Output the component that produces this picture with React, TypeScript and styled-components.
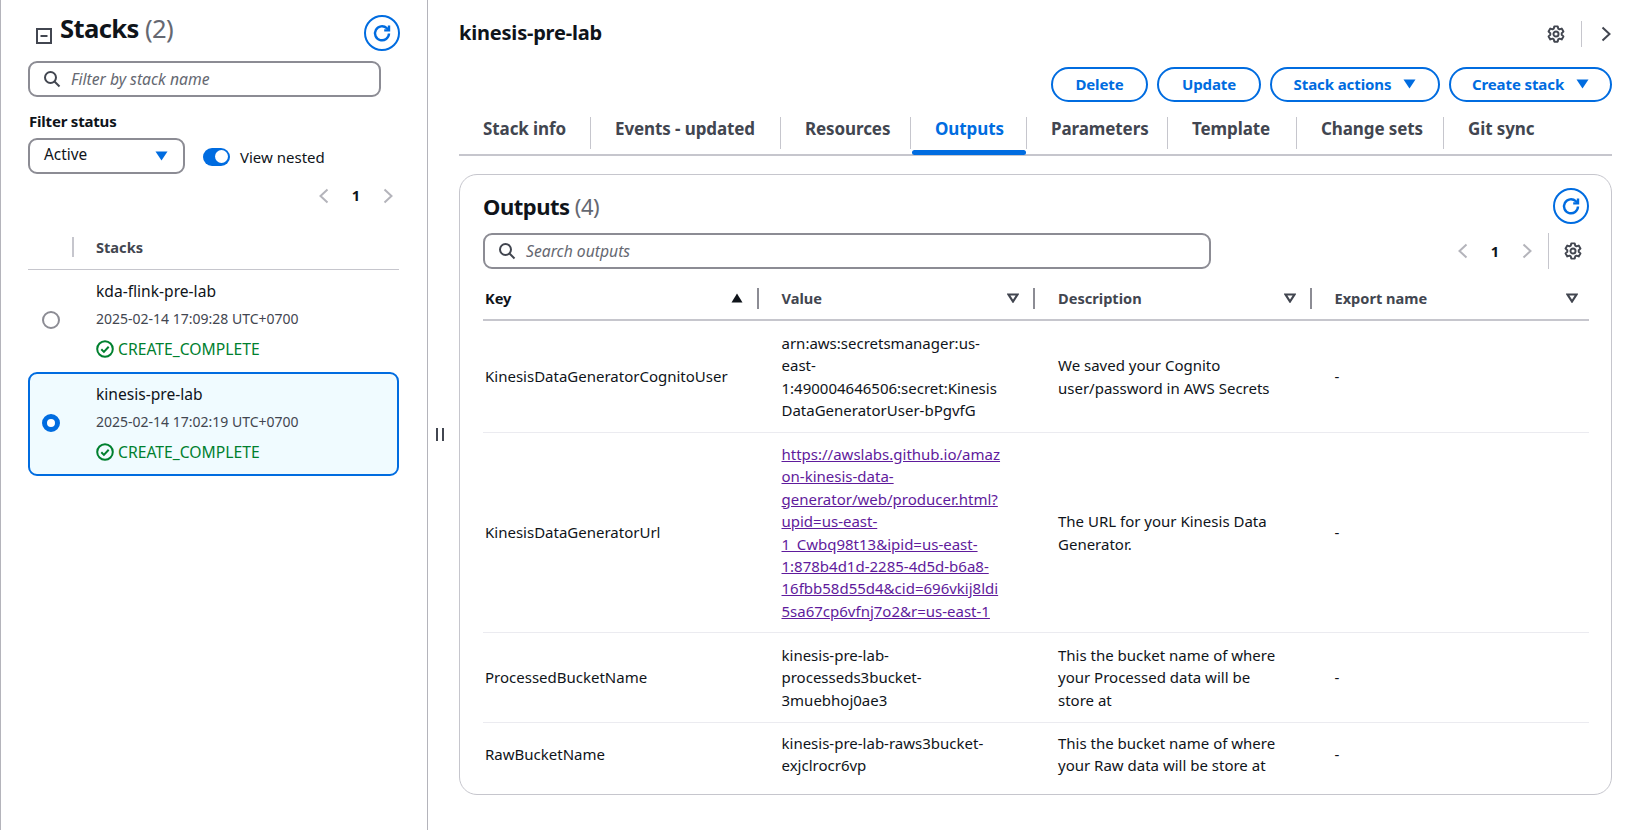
import { FunctionComponent, ReactNode } from "react";
import styled, { createGlobalStyle } from "styled-components";

const BLUE = "#006ce0";
const TEXT = "#0f141a";
const SUBTLE = "#424650";
const GREY = "#8c8c94";
const LINE = "#c6c6cd";

const GlobalStyle = createGlobalStyle`
  html, body {
    margin: 0;
    padding: 0;
    background: #ffffff;
  }
  body {
    font-family: "Noto Sans", "Open Sans", sans-serif;
    font-size: 15px;
    line-height: 22.4px;
    color: ${TEXT};
  }
  *, *::before, *::after {
    box-sizing: border-box;
  }
`;

const Page = styled.div`
  display: flex;
  height: 830px;
  width: 1638px;
  overflow: hidden;
`;

/* left panel */
const SidePanel = styled.aside`
  width: 428px;
  flex-shrink: 0;
  border-left: 1px solid #b4b4bb;
  border-right: 1px solid #b4b4bb;
  padding: 14px 27px 0 27px;
`;
const SideHead = styled.div`
  display: flex;
  align-items: center;
  justify-content: space-between;
  height: 37px;
  margin-bottom: 10px;
`;
const SideTitle = styled.div`
  display: flex;
  align-items: center;
  gap: 8px;
  padding-left: 8px;
  svg {
    margin-top: 6px;
  }
`;
const H1 = styled.h1`
  margin: 0 0 8px;
  font-size: 25.6px;
  line-height: 32px;
  font-weight: 700;
  letter-spacing: -0.6px;
  span {
    font-weight: 400;
    color: #656871;
  }
`;
const H2 = styled.h2`
  margin: 0;
  font-size: 22px;
  line-height: 30px;
  font-weight: 700;
  letter-spacing: -0.5px;
  span {
    font-weight: 400;
    color: #656871;
  }
`;
const RoundIconButton = styled.button`
  width: 36px;
  height: 36px;
  flex-shrink: 0;
  border: 2px solid ${BLUE};
  border-radius: 50%;
  background: #fff;
  padding: 0;
  display: flex;
  align-items: center;
  justify-content: center;
  color: ${BLUE};
`;
const SearchBox = styled.div<{ $width: number }>`
  width: ${(p) => p.$width}px;
  height: 36px;
  border: 2px solid ${GREY};
  border-radius: 9px;
  display: flex;
  align-items: center;
  gap: 10px;
  padding: 0 13px;
  font-style: italic;
  font-size: 15.7px;
  color: #656871;
`;
const FilterLabel = styled.div`
  margin-top: 13px;
  padding-left: 1px;
  font-weight: 700;
  font-size: 15px;
  letter-spacing: -0.2px;
`;
const FilterRow = styled.div`
  margin-top: 6px;
  display: flex;
  align-items: center;
  gap: 18px;
`;
const SelectBox = styled.div`
  width: 157px;
  height: 36px;
  border: 2px solid ${GREY};
  border-radius: 9px;
  display: flex;
  align-items: center;
  justify-content: space-between;
  padding: 0 15px 0 14px;
  font-size: 15.4px;
  span {
    margin-bottom: 3px;
  }
`;
const ToggleWrap = styled.div`
  display: flex;
  align-items: center;
  gap: 10px;
  padding-top: 1px;
`;
const Toggle = styled.div`
  width: 27px;
  height: 18px;
  border-radius: 9px;
  background: ${BLUE};
  display: flex;
  align-items: center;
  justify-content: flex-end;
  padding-right: 2px;
  &::after {
    content: "";
    width: 13px;
    height: 13px;
    border-radius: 50%;
    background: #fff;
  }
`;
const Pager = styled.div`
  display: flex;
  align-items: center;
  gap: 23px;
  font-weight: 700;
  font-size: 14.6px;
`;
const SidePager = styled(Pager)`
  justify-content: flex-end;
  padding: 0 7px 0 0;
  margin-top: 10px;
`;
const SideColumnHead = styled.div`
  margin: 30px 1px 0 0;
  height: 33px;
  border-bottom: 1px solid ${LINE};
  display: flex;
  align-items: flex-start;
  padding-left: 44px;
  font-weight: 700;
  font-size: 14.6px;
  color: ${SUBTLE};
`;
const SideColumnName = styled.div`
  border-left: 2px solid ${LINE};
  height: 20px;
  padding-left: 22px;
  line-height: 20px;
`;
const StackRow = styled.div<{ $selected?: boolean }>`
  height: ${(p) => (p.$selected ? 104 : 102)}px;
  margin-right: 1px;
  display: flex;
  align-items: center;
  border: 2px solid ${(p) => (p.$selected ? BLUE : "transparent")};
  border-radius: 9px;
  background: ${(p) => (p.$selected ? "#f0fbff" : "transparent")};
  padding: 0 0 2px 12px;
`;
const Radio = styled.div<{ $checked?: boolean }>`
  width: 18px;
  height: 18px;
  flex-shrink: 0;
  border-radius: 50%;
  border: ${(p) => (p.$checked ? `5px solid ${BLUE}` : `2px solid ${GREY}`)};
  background: #fff;
`;
const StackInfo = styled.div`
  margin-left: 36px;
  display: flex;
  flex-direction: column;
  gap: 6.2px;
`;
const StackName = styled.div`
  font-size: 15.6px;
`;
const StackDate = styled.div`
  font-size: 14px;
  color: ${SUBTLE};
`;
const StackStatus = styled.div`
  display: flex;
  align-items: center;
  gap: 4px;
  margin-top: 1px;
  color: #00802f;
  font-size: 15.7px;
`;

/* splitter */
const Handle = styled.div`
  width: 31px;
  flex-shrink: 0;
  display: flex;
  padding-top: 428px;
  padding-left: 8px;
  &::before {
    content: "";
    width: 8px;
    height: 13px;
    border-left: 2px solid ${SUBTLE};
    border-right: 2px solid ${SUBTLE};
  }
`;

/* main */
const Main = styled.main`
  width: 1153px;
  flex-shrink: 0;
  padding-top: 17px;
`;
const MainHead = styled.div`
  display: flex;
  align-items: center;
  justify-content: space-between;
  height: 32px;
`;
const StackTitle = styled.div`
  font-size: 20px;
  font-weight: 700;
  letter-spacing: -0.2px;
`;
const HeadTools = styled.div`
  display: flex;
  align-items: center;
  padding: 1px 1px 0 0;
  color: ${SUBTLE};
`;
const ToolDivider = styled.div`
  width: 1px;
  height: 26px;
  background: ${LINE};
  margin: 0 19px 0 16px;
`;
const Actions = styled.div`
  margin-top: 18px;
  display: flex;
  justify-content: flex-end;
  gap: 9px;
`;
const ActionButton = styled.button<{ $width: number }>`
  width: ${(p) => p.$width}px;
  height: 35px;
  border: 2px solid ${BLUE};
  border-radius: 18px;
  background: #fff;
  color: ${BLUE};
  font: 700 15px "Noto Sans", sans-serif;
  letter-spacing: -0.1px;
  display: flex;
  align-items: center;
  justify-content: center;
  gap: 12px;
  padding: 0 0 2px;
`;
const Tabs = styled.div`
  margin-top: 5px;
  height: 49px;
  display: flex;
  border-bottom: 2px solid ${LINE};
`;
const Tab = styled.div<{ $active?: boolean; $width: number }>`
  position: relative;
  width: ${(p) => p.$width}px;
  height: 47px;
  padding: 11px 0 0 24px;
  font-size: 17px;
  font-weight: 700;
  letter-spacing: -0.1px;
  color: ${(p) => (p.$active ? BLUE : SUBTLE)};
  &:not(:last-child)::after {
    content: "";
    position: absolute;
    right: 0;
    top: 10px;
    height: 32px;
    width: 1px;
    background: ${LINE};
  }
  ${(p) =>
    p.$active &&
    `&::before {
      content: "";
      position: absolute;
      left: 1px;
      right: 1px;
      bottom: -1px;
      height: 5px;
      border-radius: 3px;
      background: ${BLUE};
    }`}
`;
const Card = styled.section`
  margin-top: 18px;
  height: 621px;
  border: 1px solid ${LINE};
  border-radius: 18px;
  padding: 13px 22px 0 23px;
`;
const CardHead = styled.div`
  display: flex;
  align-items: center;
  justify-content: space-between;
  height: 36px;
`;
const CardTools = styled.div`
  margin-top: 9px;
  display: flex;
  align-items: center;
  justify-content: space-between;
`;
const CardPager = styled(Pager)`
  padding-right: 7px;
  color: ${TEXT};
`;
const PagerDivider = styled.div`
  width: 1px;
  height: 36px;
  background: ${LINE};
  margin: 0 -8px 0 -7px;
`;
const TableHead = styled.div`
  margin-top: 18px;
  height: 34px;
  display: grid;
  grid-template-columns: repeat(4, 1fr);
  border-bottom: 2px solid ${LINE};
`;
const HeadCell = styled.div<{ $active?: boolean }>`
  position: relative;
  display: flex;
  align-items: flex-start;
  justify-content: space-between;
  height: 24px;
  padding: 0 17px 0 22px;
  font-weight: 700;
  font-size: 14.6px;
  color: ${(p) => (p.$active ? TEXT : SUBTLE)};
  svg {
    margin-top: 6px;
  }
  &:first-child {
    padding-left: 2px;
  }
  &:last-child {
    padding-right: 11px;
  }
  &:not(:last-child)::after {
    content: "";
    position: absolute;
    right: 1px;
    top: 1px;
    height: 21px;
    width: 2px;
    background: ${GREY};
  }
`;
const Row = styled.div<{ $height: number }>`
  height: ${(p) => p.$height}px;
  display: grid;
  grid-template-columns: repeat(4, 1fr);
  align-items: center;
  &:not(:last-child) {
    border-bottom: 1px solid #ebebf0;
  }
`;
const Cell = styled.div`
  padding-left: 22px;
  &:first-child {
    padding-left: 2px;
  }
`;
const Line = styled.div`
  white-space: nowrap;
`;
const LinkLine = styled(Line)`
  color: #5f1b9c;
  text-decoration: underline;
`;

/* icons */
const RefreshIcon = () => (
  <svg width="20" height="20" viewBox="0 0 20 20" fill="none" stroke="currentColor" strokeWidth="2.4">
    <path d="M17 10.5a7 7 0 1 1-2.2-5.3L17 7" />
    <path d="M17 2.6v4.8h-4.8" />
  </svg>
);
const SearchIcon = () => (
  <svg width="18" height="18" viewBox="0 0 18 18" fill="none" stroke={SUBTLE} strokeWidth="2">
    <circle cx="7.5" cy="7.5" r="5.5" />
    <path d="M11.5 11.5l5 5" />
  </svg>
);
const CollapseIcon = () => (
  <svg width="16" height="16" viewBox="0 0 16 16" fill="none" stroke={SUBTLE} strokeWidth="2">
    <rect x="1" y="1" width="14" height="14" />
    <path d="M4.5 8h7" />
  </svg>
);
const Caret = () => (
  <svg width="13" height="10" viewBox="0 0 13 10" fill={BLUE}>
    <path d="M0.5 0.5h12L6.5 9.5z" />
  </svg>
);
const SortUp = () => (
  <svg width="12" height="10" viewBox="0 0 12 10" fill={TEXT}>
    <path d="M6 0.5l5.5 9H0.5z" />
  </svg>
);
const SortDown = () => (
  <svg width="12" height="10" viewBox="0 0 12 10" fill="none" stroke={SUBTLE} strokeWidth="2.2">
    <path d="M1.5 1.5h9L6 8.5z" />
  </svg>
);
const Chevron: FunctionComponent<{ right?: boolean; color?: string }> = ({ right, color = "#b4b4bb" }) => (
  <svg width="10" height="16" viewBox="0 0 10 16" fill="none" stroke={color} strokeWidth="2">
    <path d={right ? "M1.5 1.5L8.5 8l-7 6.5" : "M8.5 1.5L1.5 8l7 6.5"} />
  </svg>
);
const GearIcon = () => (
  <svg width="18" height="18" viewBox="0 0 24 24" fill="none" stroke={SUBTLE} strokeWidth="2.6" strokeLinejoin="round">
    <path d="M9.7 1.8h4.6l.7 3.1 1.6.9 3-1 2.3 4-2.3 2.1v2.2l2.3 2.1-2.3 4-3-1-1.6.9-.7 3.1H9.7L9 19.1l-1.6-.9-3 1-2.3-4 2.3-2.1v-2.2L2.1 8.8l2.3-4 3 1 1.6-.9z" />
    <circle cx="12" cy="12" r="3.4" />
  </svg>
);
const CheckCircle = () => (
  <svg width="18" height="18" viewBox="0 0 18 18" fill="none" stroke="#00802f" strokeWidth="2">
    <circle cx="9" cy="9" r="7.8" />
    <path d="M5.3 9.3l2.6 2.6 4.8-5.2" />
  </svg>
);

const StackItem: FunctionComponent<{ name: string; date: string; selected?: boolean }> = ({ name, date, selected }) => (
  <StackRow $selected={selected}>
    <Radio $checked={selected} />
    <StackInfo>
      <StackName>{name}</StackName>
      <StackDate>{date}</StackDate>
      <StackStatus>
        <CheckCircle />
        CREATE_COMPLETE
      </StackStatus>
    </StackInfo>
  </StackRow>
);

const Lines: FunctionComponent<{ items: string[] }> = ({ items }) => (
  <>
    {items.map((t) => (
      <Line key={t}>{t}</Line>
    ))}
  </>
);

const tabs = [
  { label: "Stack info", width: 132 },
  { label: "Events - updated", width: 190 },
  { label: "Resources", width: 130 },
  { label: "Outputs", width: 116, active: true },
  { label: "Parameters", width: 141 },
  { label: "Template", width: 129 },
  { label: "Change sets", width: 147 },
  { label: "Git sync", width: 99 },
];

const urlLines = [
  "https://awslabs.github.io/amaz",
  "on-kinesis-data-",
  "generator/web/producer.html?",
  "upid=us-east-",
  "1_Cwbq98t13&ipid=us-east-",
  "1:878b4d1d-2285-4d5d-b6a8-",
  "16fbb58d55d4&cid=696vkij8ldi",
  "5sa67cp6vfnj7o2&r=us-east-1",
];

const rows: { key: string; height: number; value: ReactNode; desc: string[] }[] = [
  {
    key: "KinesisDataGeneratorCognitoUser",
    height: 112,
    value: (
      <Lines
        items={[
          "arn:aws:secretsmanager:us-",
          "east-",
          "1:490004646506:secret:Kinesis",
          "DataGeneratorUser-bPgvfG",
        ]}
      />
    ),
    desc: ["We saved your Cognito", "user/password in AWS Secrets"],
  },
  {
    key: "KinesisDataGeneratorUrl",
    height: 200,
    value: urlLines.map((t) => <LinkLine key={t}>{t}</LinkLine>),
    desc: ["The URL for your Kinesis Data", "Generator."],
  },
  {
    key: "ProcessedBucketName",
    height: 90,
    value: <Lines items={["kinesis-pre-lab-", "processeds3bucket-", "3muebhoj0ae3"]} />,
    desc: ["This the bucket name of where", "your Processed data will be", "store at"],
  },
  {
    key: "RawBucketName",
    height: 62,
    value: <Lines items={["kinesis-pre-lab-raws3bucket-", "exjclrocr6vp"]} />,
    desc: ["This the bucket name of where", "your Raw data will be store at"],
  },
];

const App: FunctionComponent = () => {
  return (
    <Page>
      <GlobalStyle />
      <SidePanel>
        <SideHead>
          <SideTitle>
            <CollapseIcon />
            <H1>
              Stacks <span>(2)</span>
            </H1>
          </SideTitle>
          <RoundIconButton>
            <RefreshIcon />
          </RoundIconButton>
        </SideHead>
        <SearchBox $width={353}>
          <SearchIcon />
          Filter by stack name
        </SearchBox>
        <FilterLabel>Filter status</FilterLabel>
        <FilterRow>
          <SelectBox>
            <span>Active</span>
            <Caret />
          </SelectBox>
          <ToggleWrap>
            <Toggle />
            View nested
          </ToggleWrap>
        </FilterRow>
        <SidePager>
          <Chevron />
          1
          <Chevron right />
        </SidePager>
        <SideColumnHead>
          <SideColumnName>Stacks</SideColumnName>
        </SideColumnHead>
        <StackItem name="kda-flink-pre-lab" date="2025-02-14 17:09:28 UTC+0700" />
        <StackItem name="kinesis-pre-lab" date="2025-02-14 17:02:19 UTC+0700" selected />
      </SidePanel>
      <Handle />
      <Main>
        <MainHead>
          <StackTitle>kinesis-pre-lab</StackTitle>
          <HeadTools>
            <GearIcon />
            <ToolDivider />
            <Chevron right color={SUBTLE} />
          </HeadTools>
        </MainHead>
        <Actions>
          <ActionButton $width={97}>Delete</ActionButton>
          <ActionButton $width={104}>Update</ActionButton>
          <ActionButton $width={170}>
            Stack actions
            <Caret />
          </ActionButton>
          <ActionButton $width={163}>
            Create stack
            <Caret />
          </ActionButton>
        </Actions>
        <Tabs>
          {tabs.map((t) => (
            <Tab key={t.label} $active={t.active} $width={t.width}>
              {t.label}
            </Tab>
          ))}
        </Tabs>
        <Card>
          <CardHead>
            <H2>
              Outputs <span>(4)</span>
            </H2>
            <RoundIconButton>
              <RefreshIcon />
            </RoundIconButton>
          </CardHead>
          <CardTools>
            <SearchBox $width={728}>
              <SearchIcon />
              Search outputs
            </SearchBox>
            <CardPager>
              <Chevron />
              1
              <Chevron right />
              <PagerDivider />
              <GearIcon />
            </CardPager>
          </CardTools>
          <TableHead>
            <HeadCell $active>
              Key
              <SortUp />
            </HeadCell>
            <HeadCell>
              Value
              <SortDown />
            </HeadCell>
            <HeadCell>
              Description
              <SortDown />
            </HeadCell>
            <HeadCell>
              Export name
              <SortDown />
            </HeadCell>
          </TableHead>
          {rows.map((r) => (
            <Row key={r.key} $height={r.height}>
              <Cell>{r.key}</Cell>
              <Cell>{r.value}</Cell>
              <Cell>
                <Lines items={r.desc} />
              </Cell>
              <Cell>-</Cell>
            </Row>
          ))}
        </Card>
      </Main>
    </Page>
  );
};

export default App;
